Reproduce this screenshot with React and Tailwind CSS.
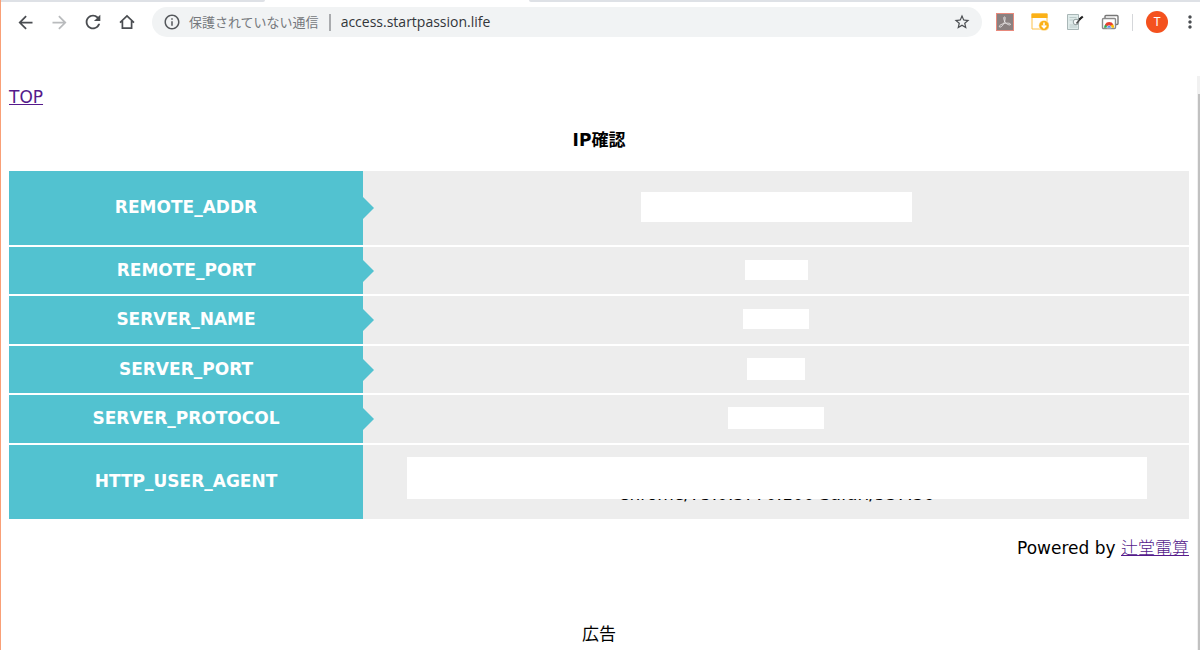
import React from 'react';
import { MdArrowBack, MdArrowForward, MdRefresh, MdInfoOutline, MdStarBorder, MdMoreVert } from 'react-icons/md';

const ROWS = [
  { name: 'REMOTE_ADDR', height: 'h-[74px]', mask: 'w-[271px] h-[30px]' },
  { name: 'REMOTE_PORT', height: 'h-[47px]', mask: 'w-[63px] h-5' },
  { name: 'SERVER_NAME', height: 'h-[48px]', mask: 'w-[66px] h-5' },
  { name: 'SERVER_PORT', height: 'h-[47px]', mask: 'w-[58px] h-[22px]' },
  { name: 'SERVER_PROTOCOL', height: 'h-[48px]', mask: 'w-24 h-[22px]' },
];

function HomeIcon() {
  return (
    <svg viewBox="0 0 16 16" className="size-4" fill="none" stroke="#4a4d51" strokeWidth="1.7">
      <path d="M1 8.6 8 2l7 6.6M3.4 7v7.2h9.2V7" />
    </svg>
  );
}

function PdfIcon() {
  return (
    <svg viewBox="0 0 18 18" className="size-[18px]">
      <rect x="0.5" y="0.5" width="17" height="17" fill="#8a8080" stroke="#e8897c" />
      <path d="M3.4 13.8c-.6-1.600 3-3 5.200-3.400 2.600-.5 6-.3 5.900.9-.2 1.400-3.600.2-5.200-1.800C7.900 7.800 7.300 4 8.400 3.800c1.300-.1.700 3.400-.2 5.700-1 2.600-3.600 5.600-4.800 4.300z" fill="none" stroke="#e6e2e2" strokeWidth="1" />
    </svg>
  );
}

function DownloadIcon() {
  return (
    <svg viewBox="0 0 18 18" className="size-[18px]">
      <path d="M1 1h15v15H1z" fill="#fff" stroke="#fcc14a" />
      <path d="M0.5 0.5h16v4.500h-16z" fill="#fbb117" />
      <circle cx="13" cy="12.5" r="5.200" fill="#fbb117" stroke="#fff" strokeWidth="0.6" />
      <path d="M13 9.500v5M10.700 12.500l2.300 2.400 2.300-2.400" fill="none" stroke="#fff" strokeWidth="1.500" />
    </svg>
  );
}

function NoteIcon() {
  return (
    <svg viewBox="0 0 18 18" className="size-[18px]">
      <path d="M1.500 1.500h11v15h-11z" fill="#dfebea" stroke="#a9b7b7" />
      <path d="M3.500 4.500h7M3.500 7h4M3.500 12h7M3.500 14h8" stroke="#bccbca" />
      <circle cx="10" cy="9" r="2.800" fill="#f8fbfb" stroke="#8f9c9c" />
      <path d="m10.500 10.500 5-6" stroke="#4b4b4b" strokeWidth="1.600" />
      <path d="m13.200 6.500 3.600-3" stroke="#222" strokeWidth="2.200" />
    </svg>
  );
}

function RemoteDesktopIcon() {
  return (
    <svg viewBox="0 0 18 18" className="size-[18px]">
      <rect x="4" y="2.5" width="13" height="9" rx="1" fill="#fff" stroke="#777" strokeWidth="1.4" />
      <rect x="1.5" y="5.5" width="13" height="10" rx="1" fill="#fff" stroke="#8a8a8a" strokeWidth="1.4" />
      <path d="M3 14.800a5 5 0 0 1 2-4.100l2 4.100z" fill="#35a853" />
      <path d="M4 11.500a4.800 4.800 0 0 1 8.400 0L10 13H6z" fill="#e8402f" />
      <path d="M12.300 11.500a5 5 0 0 1 .7 3.300H9.500l.5-2.500z" fill="#fbbc05" />
      <path d="M5.800 14.900a2.300 2.300 0 0 1 4.600 0z" fill="#3f7ee8" stroke="#fff" strokeWidth="0.6" />
    </svg>
  );
}

const EXTENSIONS = [
  { label: 'PDF', Icon: PdfIcon },
  { label: 'Download', Icon: DownloadIcon },
  { label: 'Note', Icon: NoteIcon },
  { label: 'Remote desktop', Icon: RemoteDesktopIcon },
];

const NAV = [
  { label: 'Back', icon: <MdArrowBack size={21} color="#4a4d51" /> },
  { label: 'Forward', icon: <MdArrowForward size={21} color="#b9bbbd" /> },
  { label: 'Reload', icon: <MdRefresh size={22} color="#4a4d51" /> },
  { label: 'Home', icon: <HomeIcon /> },
];

function Toolbar() {
  return (
    <header>
      {/* Bottom edge of the tab strip */}
      <div className="flex h-0.5 bg-white">
        <div className="w-[264px] rounded-br-sm bg-[#dee1e6]" />
        <div className="w-[264px]" />
        <div className="flex-1 rounded-bl-sm bg-[#dee1e6]" />
      </div>

      <div className="flex items-center pl-[7px] pt-[5px]">
        {NAV.map(({ label, icon }) => (
          <button key={label} aria-label={label} className="flex h-[30px] w-[34px] items-center justify-center">
            {icon}
          </button>
        ))}

        <div className="ml-2 flex h-[30px] flex-1 items-center rounded-full bg-[#f1f3f4] px-[11px] text-sm">
          <MdInfoOutline size={18} color="#55585c" />
          <span className="ml-2 whitespace-nowrap font-['Noto_Sans_CJK_JP',sans-serif] text-[13px] text-[#75787c]">
            保護されていない通信
          </span>
          <span className="ml-2.5 h-[17px] w-0.5 bg-[#a9abae]" />
          <input
            aria-label="Address"
            defaultValue="access.startpassion.life"
            className="ml-2.5 min-w-0 flex-1 bg-transparent font-['Open_Sans',sans-serif] text-[#33363a] outline-none"
          />
          <button aria-label="Bookmark">
            <MdStarBorder size={18} color="#4a4d51" />
          </button>
        </div>

        <div className="ml-[5px] flex">
          {EXTENSIONS.map(({ label, Icon }) => (
            <button key={label} aria-label={label} className="flex w-[35px] items-center justify-center">
              <Icon />
            </button>
          ))}
        </div>
        <div className="ml-[5px] h-[17px] w-px bg-[#d5d7da]" />
        <button className="ml-[13px] size-[22px] rounded-full bg-[#f4511e] font-[Roboto,sans-serif] text-xs text-white">
          T
        </button>
        <button aria-label="Menu" className="ml-3 flex w-5 items-center justify-center">
          <MdMoreVert size={20} color="#4a4d51" className="shrink-0" />
        </button>
      </div>
    </header>
  );
}

function HeadCell({ children }) {
  return (
    <th scope="row" className="relative w-[30%] bg-[#52c2d0] p-0 pb-0.5 text-center font-bold text-white">
      {children}
      <span className="absolute left-full top-1/2 -mt-[11px] border-y-[11px] border-l-[11px] border-y-transparent border-l-[#52c2d0]" />
    </th>
  );
}

function ServerTable() {
  return (
    <table className="w-full border-collapse">
      <tbody>
        {ROWS.map(({ name, height, mask }) => (
          <React.Fragment key={name}>
            <tr className={height}>
              <HeadCell>{name}</HeadCell>
              <td className="bg-[#ededed] p-0 pb-0.5">
                <div className={`mx-auto bg-white ${mask}`} />
              </td>
            </tr>
            <tr className="h-0.5" aria-hidden="true">
              <td colSpan={2} className="p-0" />
            </tr>
          </React.Fragment>
        ))}
        <tr className="h-[74px]">
          <HeadCell>HTTP_USER_AGENT</HeadCell>
          <td className="relative bg-[#ededed] px-10 pb-3 pt-9 text-center">
            Chrome/75.0.3770.100 Safari/537.36
            <div className="absolute left-11 right-[42px] top-3 h-[42px] bg-white" />
          </td>
        </tr>
      </tbody>
    </table>
  );
}

export default function App() {
  return (
    <div className="flex min-h-screen flex-col border-l border-[#f9a077] bg-white">
      <Toolbar />
      <div className="mt-[39px] flex flex-1">
        <main className="min-w-0 flex-1 px-2 pt-2 font-['DejaVu_Sans','Noto_Sans_CJK_JP',sans-serif] text-[17px] leading-[26px] text-black">
          <a href="#top" className="text-[#551a8b] underline">TOP</a>
          <h1 className="mb-[18px] mt-[17px] text-center font-bold">IP確認</h1>
          <ServerTable />
          <p className="mt-4 text-right">
            Powered by{' '}
            <a href="#powered" className="font-light text-[#551a8b] underline">辻堂電算</a>
          </p>
          <p className="mt-[60px] text-center">広告</p>
        </main>
        {/* Scrollbar */}
        <div className="w-[3px] bg-[#f1f1f1] pl-px pt-[18px]">
          <div className="h-full bg-[#c1c1c1]" />
        </div>
      </div>
    </div>
  );
}
